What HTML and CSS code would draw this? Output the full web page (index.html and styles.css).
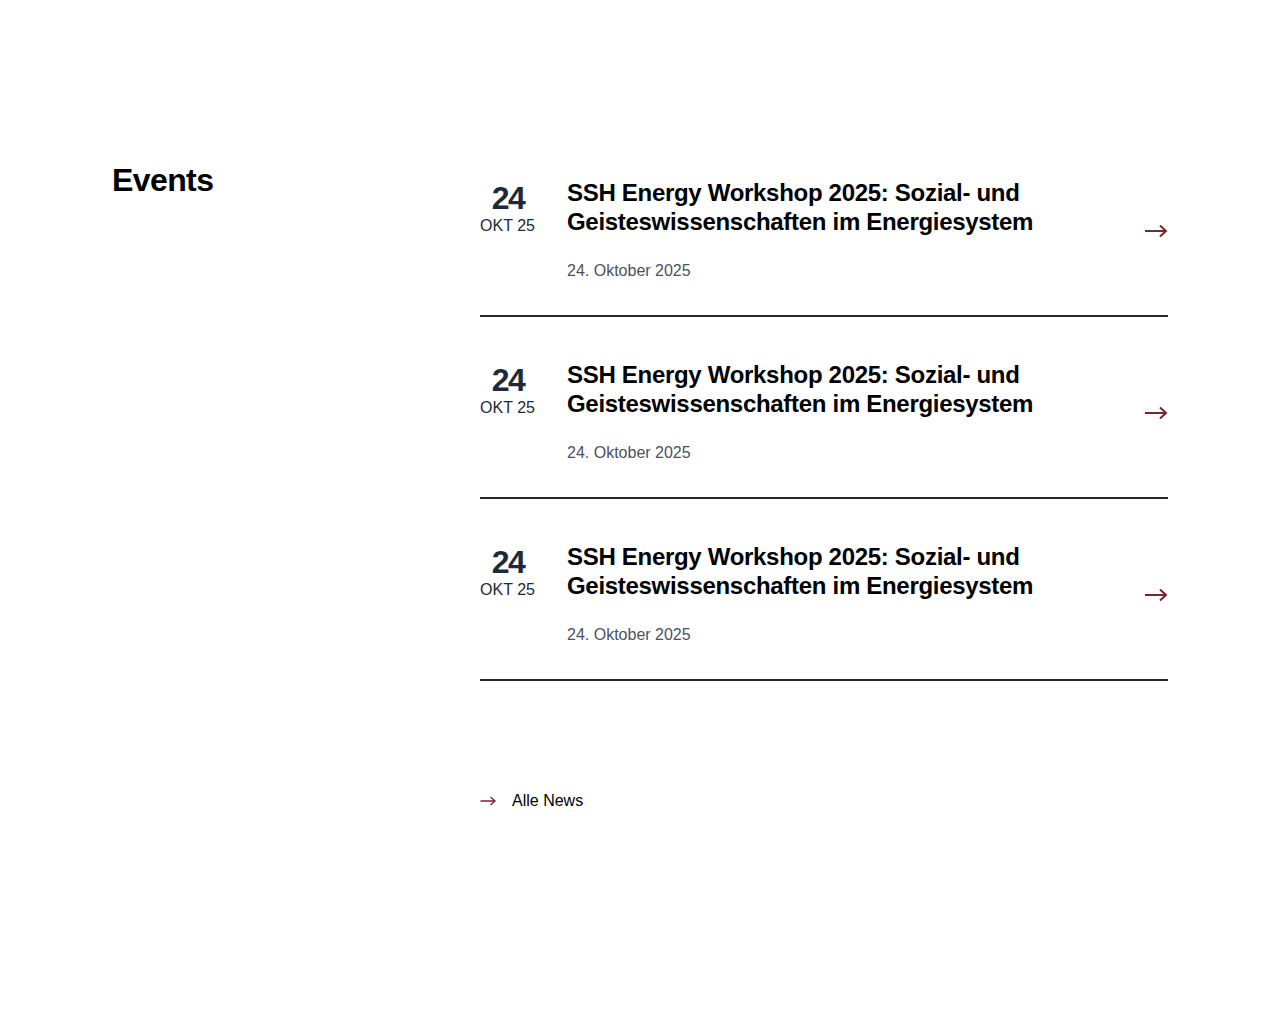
FILE: index.html
```html
<!DOCTYPE html>
<html lang="de">
<head>
<meta charset="utf-8">
<title>Events</title>
<link rel="stylesheet" href="styles.css">
</head>
<body>
<section class="events">
  <h2 class="events-heading">Events</h2>
  <div class="events-list">
    <a class="event" href="#">
      <div class="event-date">
        <span class="event-day">24</span>
        <span class="event-month">OKT 25</span>
      </div>
      <div class="event-body">
        <h3 class="event-title">SSH Energy Workshop 2025: Sozial- und Geisteswissenschaften im Energiesystem</h3>
        <p class="event-meta">24. Oktober 2025</p>
      </div>
      <svg class="event-arrow" width="24" height="14" viewBox="0 0 24 14" aria-hidden="true"><path d="M1 7H22M16 1.5L22 7L16 12.5" fill="none" stroke="#7a2530" stroke-width="2"/></svg>
    </a>
    <a class="event" href="#">
      <div class="event-date">
        <span class="event-day">24</span>
        <span class="event-month">OKT 25</span>
      </div>
      <div class="event-body">
        <h3 class="event-title">SSH Energy Workshop 2025: Sozial- und Geisteswissenschaften im Energiesystem</h3>
        <p class="event-meta">24. Oktober 2025</p>
      </div>
      <svg class="event-arrow" width="24" height="14" viewBox="0 0 24 14" aria-hidden="true"><path d="M1 7H22M16 1.5L22 7L16 12.5" fill="none" stroke="#7a2530" stroke-width="2"/></svg>
    </a>
    <a class="event" href="#">
      <div class="event-date">
        <span class="event-day">24</span>
        <span class="event-month">OKT 25</span>
      </div>
      <div class="event-body">
        <h3 class="event-title">SSH Energy Workshop 2025: Sozial- und Geisteswissenschaften im Energiesystem</h3>
        <p class="event-meta">24. Oktober 2025</p>
      </div>
      <svg class="event-arrow" width="24" height="14" viewBox="0 0 24 14" aria-hidden="true"><path d="M1 7H22M16 1.5L22 7L16 12.5" fill="none" stroke="#7a2530" stroke-width="2"/></svg>
    </a>
    <a class="all-link" href="#">
      <svg class="all-arrow" width="16" height="10" viewBox="0 0 16 10" aria-hidden="true"><path d="M0.5 5H15M10.5 1L15 5L10.5 9" fill="none" stroke="#7a2530" stroke-width="1.3"/></svg>
      <span>Alle News</span>
    </a>
  </div>
</section>
</body>
</html>
```

FILE: styles.css
```css
* { box-sizing: border-box; }
body {
  margin: 0;
  background: #fff;
  font-family: "Liberation Sans", Arial, sans-serif;
  color: #000;
}
.events {
  display: grid;
  grid-template-columns: 368px 688px;
  width: 1056px;
  margin: 0 auto;
  padding-top: 160px;
  padding-bottom: 200px;
}
.events-heading {
  margin: 0;
  font-size: 32px;
  line-height: 40px;
  font-weight: 700;
  letter-spacing: -0.6px;
}
.events-list {
  display: flex;
  flex-direction: column;
  padding-top: 18px;
}
.event {
  display: flex;
  align-items: center;
  padding-bottom: 34px;
  margin-bottom: 43px;
  border-bottom: 2px solid #1e2a38;
  text-decoration: none;
  color: inherit;
}
.event-date {
  width: 55px;
  margin-right: 32px;
  align-self: flex-start;
  display: flex;
  flex-direction: column;
  align-items: center;
  color: #1e2a38;
}
.event-day {
  font-size: 32px;
  line-height: 32px;
  font-weight: 700;
  letter-spacing: -1.5px;
  margin-top: 4px;
  padding-left: 1px;
}
.event-month {
  font-size: 16px;
  line-height: 20px;
  margin-top: 2px;
  white-space: nowrap;
}
.event-body {
  flex: 1;
}
.event-title {
  margin: 0;
  font-size: 24px;
  line-height: 29px;
  font-weight: 700;
  letter-spacing: -0.3px;
  max-width: 480px;
}
.event-meta {
  margin: 25px 0 0;
  font-size: 16px;
  line-height: 20px;
  color: #4a5260;
}
.event-arrow {
  flex: none;
  margin-right: 0;
  margin-top: 2px;
}
.all-link {
  display: flex;
  align-items: center;
  gap: 16px;
  margin-top: 67px;
  text-decoration: none;
  color: #000;
  font-size: 16px;
  line-height: 20px;
}
.all-arrow { flex: none; }
```
